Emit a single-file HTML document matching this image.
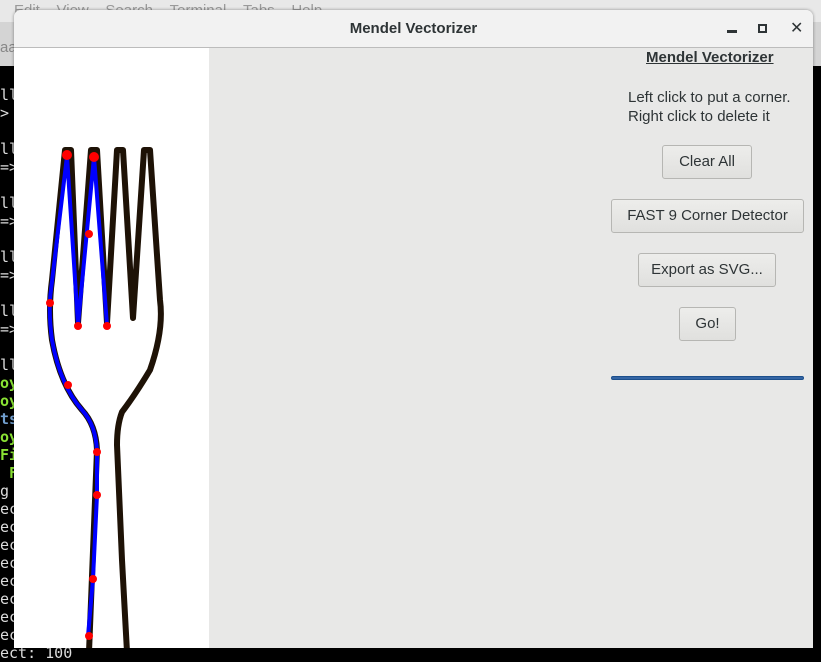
<!DOCTYPE html>
<html><head><meta charset="utf-8"><style>
html,body{margin:0;padding:0}
body{width:821px;height:660px;position:relative;overflow:hidden;background:#000;font-family:"Liberation Sans","DejaVu Sans",sans-serif}
.top{position:absolute;left:0;top:0;width:821px;height:22px;background:#e8e8e8;color:#9a9a9a;font-size:15px}
.tabs{position:absolute;left:0;top:22px;width:821px;height:44px;background:#d4d4d4;color:#888;font-size:15px}
pre{position:absolute;left:0;top:86px;margin:0;font-family:"DejaVu Sans Mono","Liberation Mono",monospace;font-size:15px;line-height:18px;color:#ddd}
.g{color:#8ae234;font-weight:bold}.b{color:#729fcf;font-weight:bold}
.win{position:absolute;left:14px;top:10px;width:799px;height:638px;background:#e8e8e7;border-radius:7px 7px 0 0;overflow:hidden;box-shadow:0 0 3px rgba(0,0,0,.4)}
.title{height:37px;background:#f2f2f2;border-bottom:1px solid #bcbcbc;text-align:center;font-size:15px;font-weight:bold;color:#2e3436;line-height:37px;position:relative}
.img{position:absolute;left:0;top:38px;width:195px;height:600px;background:#fff}
.btn{position:absolute;height:31px;border:1px solid #b6b6b3;border-radius:3px;background:linear-gradient(#ededeb,#e0e0de);font-size:15px;color:#2e3436;text-align:center;line-height:31px;box-sizing:border-box}
.lbl{position:absolute;color:#2e3436;font-size:15px}
</style></head><body>
<div class="top"><span style="position:absolute;left:14px;top:2px">Edit&nbsp;&nbsp;&nbsp;&nbsp;View&nbsp;&nbsp;&nbsp;&nbsp;Search&nbsp;&nbsp;&nbsp;&nbsp;Terminal&nbsp;&nbsp;&nbsp;&nbsp;Tabs&nbsp;&nbsp;&nbsp;&nbsp;Help</span></div>
<div class="tabs"><span style="position:absolute;left:0;top:17px">aa</span></div>
<pre>ll
>

ll
=>

ll
=>

ll
=>

ll
=>

ll
<span class="g">oy</span>
<span class="g">oy</span>
<span class="b">ts</span>
<span class="g">oy</span>
<span class="g">Fi</span>
<span class="g"> F</span>
g
ec
ec
ec
ec
ec
ec
ec
ec
ect: 100</pre>
<div class="win">
 <div class="title">Mendel Vectorizer
  <span style="position:absolute;left:713px;top:20px;width:10px;height:3px;background:#2e3436"></span>
  <span style="position:absolute;left:744px;top:14px;width:5px;height:5px;border:2px solid #2e3436"></span>
  <span style="position:absolute;left:776px;top:0;font-size:16px">✕</span>
 </div>
 <div class="img">
 <svg width="195" height="600" viewBox="14 48 195 600">
  <path d="M89,652 L97,450 Q96,425 82,410 Q60,385 52,340 Q48,310 52,280 L65,150 L71,150 L78,323 L91,150 L97,150 L107,323 L117,150 L123,150 L133,318 L144,150 L150,150 L160,300 Q164,330 150,370 Q135,395 122,412 Q117,425 117,445 L122,560 L127,652" fill="none" stroke="#1e1206" stroke-width="6" stroke-linejoin="round"/>
  <path d="M88,636 L93,579 L97,495 L97,452 Q96,425 82,410 Q60,385 52,340 Q48,310 51,290 L67,156 L78,325 L94,157 L107,325" fill="none" stroke="#0000ff" stroke-width="4" stroke-linejoin="round"/>
  <g fill="#ff0000">
   <circle cx="67" cy="155" r="5"/><circle cx="94" cy="157" r="5"/><circle cx="89" cy="234" r="4"/>
   <circle cx="50" cy="303" r="4"/><circle cx="78" cy="326" r="4"/><circle cx="107" cy="326" r="4"/>
   <circle cx="68" cy="385" r="4"/><circle cx="97" cy="452" r="4"/><circle cx="97" cy="495" r="4"/>
   <circle cx="93" cy="579" r="4"/><circle cx="89" cy="636" r="4"/>
  </g>
 </svg>
 </div>
 <div class="lbl" style="left:632px;top:39px;font-weight:bold;text-decoration:underline">Mendel Vectorizer</div>
 <div class="lbl" style="left:614px;top:78px;line-height:19px">Left click to put a corner.<br>Right click to delete it</div>
 <div class="btn" style="left:648px;top:135px;width:90px;height:34px;line-height:32px">Clear All</div>
 <div class="btn" style="left:597px;top:189px;width:193px;height:34px;line-height:32px">FAST 9 Corner Detector</div>
 <div class="btn" style="left:624px;top:243px;width:138px;height:34px;line-height:32px">Export as SVG...</div>
 <div class="btn" style="left:665px;top:297px;width:57px;height:34px;line-height:32px">Go!</div>
 <div style="position:absolute;left:597px;top:366px;width:193px;height:4px;background:#3465a4;border:1px solid #1c4f8c;box-sizing:border-box;border-radius:2px"></div>
</div>
</body></html>
